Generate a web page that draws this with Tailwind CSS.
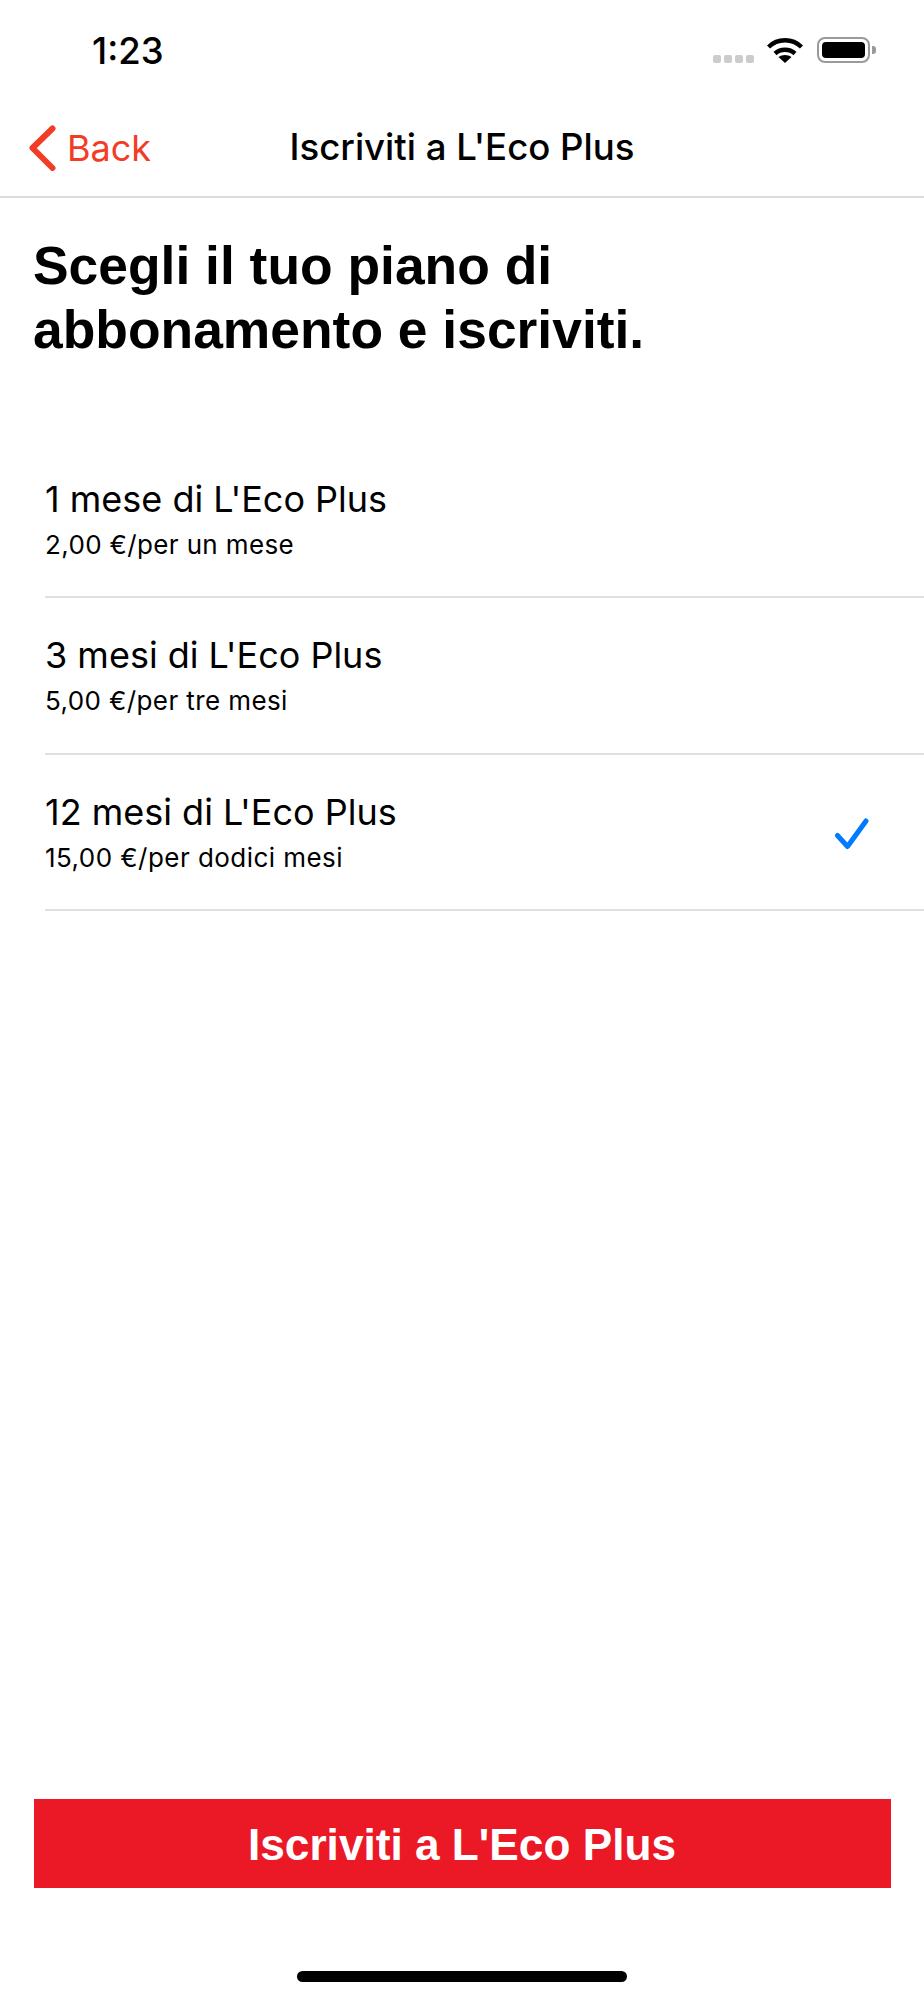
<!DOCTYPE html>
<html lang="it">
<head>
<meta charset="utf-8">
<script src="https://cdn.jsdelivr.net/npm/@tailwindcss/browser@4"></script>
</head>
<body class="bg-white text-black font-['Inter',sans-serif]">
<div class="w-[924px] h-[2000px] flex flex-col overflow-hidden">
  <div class="h-[100px] flex justify-between items-start shrink-0">
    <div class="ml-[92px] mt-[31px] text-[36.5px] leading-[40px] font-medium">1:23</div>
    <div class="flex items-start mt-[37px] mr-[48px]">
      <div class="flex gap-[3px] mt-[18px]">
        <div class="w-[8px] h-[8px] rounded-[2px] bg-[#cccccc]"></div>
        <div class="w-[8px] h-[8px] rounded-[2px] bg-[#cccccc]"></div>
        <div class="w-[8px] h-[8px] rounded-[2px] bg-[#cccccc]"></div>
        <div class="w-[8px] h-[8px] rounded-[2px] bg-[#cccccc]"></div>
      </div>
      <svg class="ml-[13px]" width="36" height="26" viewBox="0 0 36 26" fill="none" stroke="black" stroke-width="4.4">
        <path d="M1.5 10 C10.5 1, 25.5 1, 34.5 10"/>
        <path d="M8 16.5 C13.5 11.5, 22.5 11.5, 28 16.5"/>
        <path d="M18 26 L11.5 20 C15 17.3, 21 17.3, 24.5 20 Z" fill="black" stroke="none"/>
      </svg>
      <div class="ml-[14px] w-[53px] h-[26px] rounded-[8px] border-2 border-[#9a9a9a] p-[3px]">
        <div class="w-full h-full rounded-[4px] bg-black"></div>
      </div>
      <div class="ml-[2px] mt-[9px] w-[4px] h-[8px] rounded-r-[3px] bg-[#9a9a9a]"></div>
    </div>
  </div>

  <div class="relative h-[98px] shrink-0 border-b-2 border-[#dcdcdc] flex items-center justify-center">
    <div class="absolute left-[28px] top-[25px] flex items-center">
      <svg width="28" height="46" viewBox="0 0 28 46" fill="none" stroke="#f23c26" stroke-width="6" stroke-linecap="round" stroke-linejoin="round">
        <path d="M24.5 3.5 L4.5 23 L24.5 43"/>
      </svg>
      <span class="ml-[11px] text-[36px] leading-[44px] text-[#f23c26]">Back</span>
    </div>
    <div class="text-[36.6px] leading-[44px] font-[550] -mt-[3px]">Iscriviti a L'Eco Plus</div>
  </div>

  <h1 class="ml-[33px] mt-[36px] font-['Liberation_Sans',sans-serif] font-bold text-[53.4px] leading-[64px]">Scegli il tuo piano di<br>abbonamento e iscriviti.</h1>

  <div class="ml-[45px] mt-[79.5px]">
    <div class="h-[156.5px] border-b-2 border-[#e0e0e0] pt-[35px]">
      <div class="text-[36px] leading-[44px]">1 mese di L'Eco Plus</div>
      <div class="text-[26px] leading-[30px] mt-[9px] tracking-[0.36px]">2,00 €/per un mese</div>
    </div>
    <div class="h-[156.5px] border-b-2 border-[#e0e0e0] pt-[35px]">
      <div class="text-[36px] leading-[44px]">3 mesi di L'Eco Plus</div>
      <div class="text-[26px] leading-[30px] mt-[9px] tracking-[0.4px]">5,00 €/per tre mesi</div>
    </div>
    <div class="h-[156.5px] border-b-2 border-[#e0e0e0] pt-[35px] flex justify-between">
      <div>
        <div class="text-[36px] leading-[44px]">12 mesi di L'Eco Plus</div>
        <div class="text-[26px] leading-[30px] mt-[9px] tracking-[0.45px]">15,00 €/per dodici mesi</div>
      </div>
      <svg class="mr-[52px] mt-[28px]" width="38" height="36" viewBox="0 0 38 36" fill="none" stroke="#007aff" stroke-width="5" stroke-linecap="round" stroke-linejoin="round">
        <path d="M3.5 17.5 L13.5 28.5 L32 3"/>
      </svg>
    </div>
  </div>

  <div class="mt-auto mx-[33.5px] h-[89px] pt-[3px] bg-[#eb1826] flex items-center justify-center text-white font-['Liberation_Sans',sans-serif] font-bold text-[44.2px] shrink-0">Iscriviti a L'Eco Plus</div>
  <div class="mt-[83px] mb-[18px] mx-auto w-[330px] h-[11px] rounded-full bg-black shrink-0"></div>
</div>
</body>
</html>
